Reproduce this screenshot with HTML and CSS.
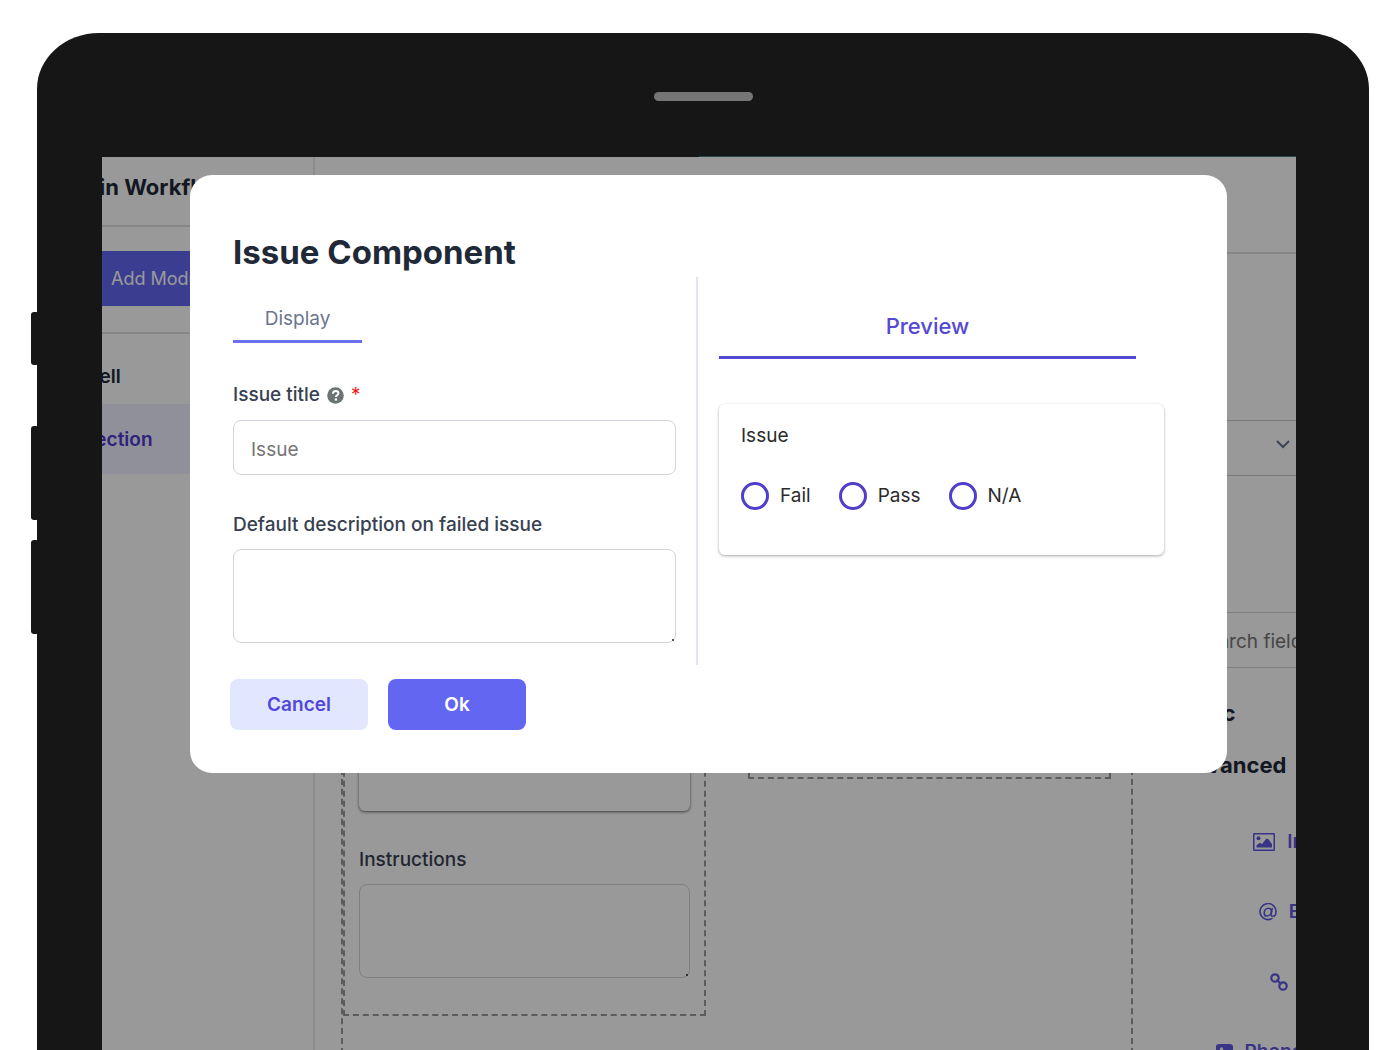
FILE: index.html
```
<!DOCTYPE html>
<html lang="en">
<head>
    <meta charset="UTF-8">
    <meta name="viewport" content="width=device-width, initial-scale=1.0">
    <title>Issue Component</title>
    <link rel="stylesheet" href="styles.css">
</head>
<body>

<div class="tablet">
    <span class="side-button side-button-power"></span>
    <span class="side-button side-button-up"></span>
    <span class="side-button side-button-down"></span>

    <div class="bezel">
        <span class="speaker"></span>
    </div>

    <div class="screen">
        <div class="workspace">
            <nav class="sidebar">
                <h2 class="sidebar-title">Main Workflow</h2>
                <div class="sidebar-action">
                    <button class="add-button" type="button">Add Module</button>
                </div>
                <a class="nav-item" href="#">Well</a>
                <a class="nav-item active" href="#">Section</a>
            </nav>

            <div class="work-area">
                <div class="topbar"></div>
                <div class="columns">
                    <main class="canvas">
                        <div class="drop-column">
                            <div class="canvas-card"></div>
                            <label class="field-label" for="instructions">Instructions</label>
                            <textarea class="text-field area" id="instructions"></textarea>
                        </div>
                        <div class="drop-column"></div>
                    </main>

                    <aside class="fields-panel">
                        <button class="panel-select" type="button" aria-label="Open list">
                            <svg width="14" height="9" viewBox="0 0 14 9" fill="none" stroke="currentColor" stroke-width="2"><path d="M1 1l6 6 6-6"/></svg>
                        </button>
                        <input class="panel-search" type="text" placeholder="Search fields" aria-label="Search fields">
                        <h3 class="group-title">Basic</h3>
                        <h3 class="group-title">Advanced</h3>
                        <div class="field-list">
                            <button class="field-item" type="button">
                                <svg width="22" height="18" viewBox="0 0 22 18" fill="currentColor"><path fill-rule="evenodd" d="M1 0h20a1 1 0 0 1 1 1v16a1 1 0 0 1-1 1H1a1 1 0 0 1-1-1V1a1 1 0 0 1 1-1zm.5 1.500v15h19v-15z"/><circle cx="5.500" cy="5.200" r="2"/><path d="M3.500 14.500v-2l3-2.700 2.500 1.200 4.500-5.500 2 .8 3.500 4.700v3.500z"/></svg>
                                Image
                            </button>
                            <button class="field-item" type="button">
                                <svg width="18" height="18" viewBox="0 0 18 18" fill="none" stroke="currentColor" stroke-width="1.600"><path d="M13.500 15.200A8 8 0 1 1 17 9c0 2.800-1.500 4.300-3.200 4.300-1.500 0-1.900-1-1.600-2.400l1.100-5.700"/><path d="M12.400 8.200C12.300 6.400 11.200 5.200 9.500 5.200 7 5.200 5.200 7.400 5.200 9.900c0 1.900 1 3.100 2.700 3.100 2.300 0 4.300-2.200 4.500-4.800z"/></svg>
                                Email
                            </button>
                            <button class="field-item" type="button">
                                <svg width="18" height="18" viewBox="0 0 18 18" fill="none" stroke="currentColor" stroke-width="2.200"><circle cx="5" cy="5" r="3.700"/><circle cx="13" cy="13" r="3.700"/><path d="M6.500 6.500l5 5"/></svg>
                                Url
                            </button>
                            <button class="field-item" type="button">
                                <svg width="17" height="17" viewBox="0 0 17 17"><rect width="17" height="17" rx="3" fill="currentColor"/><path d="M4 4l2-1 1.500 3-1.300 1.200c.7 1.500 2 2.800 3.500 3.500L11 9.500l3 1.500-1 2C8 13.500 3.500 9 4 4z" fill="#fff"/></svg>
                                Phone Number
                            </button>
                        </div>
                    </aside>
                </div>
            </div>
        </div>

        <div class="overlay">
            <div class="modal" role="dialog" aria-labelledby="modal-title">
                <h1 class="modal-title" id="modal-title">Issue Component</h1>
                <div class="modal-body">
                    <form class="settings">
                        <button class="tab" type="button">Display</button>
                        <div class="label-row">
                            <label class="field-label" for="issue-title">Issue title</label>
                            <svg class="help" width="17" height="17" viewBox="0 0 17 17"><circle cx="8.500" cy="8.500" r="8.300" fill="#6b7373"/><path d="M5.900 6.600c.1-1.700 1.200-2.600 2.800-2.600 1.500 0 2.700.9 2.700 2.300 0 2-2.500 2-2.500 3.700" fill="none" stroke="#fff" stroke-width="2"/><rect x="7.800" y="11.400" width="2.200" height="2.200" fill="#fff"/></svg>
                            <span class="required">*</span>
                        </div>
                        <input class="text-field" id="issue-title" type="text" placeholder="Issue">
                        <label class="field-label" for="description">Default description on failed issue</label>
                        <textarea class="text-field area" id="description"></textarea>
                    </form>

                    <section class="preview">
                        <h2 class="preview-title">Preview</h2>
                        <fieldset class="preview-card">
                            <legend>Issue</legend>
                            <div class="options">
                                <label class="option"><input type="radio" name="issue">Fail</label>
                                <label class="option"><input type="radio" name="issue">Pass</label>
                                <label class="option"><input type="radio" name="issue">N/A</label>
                            </div>
                        </fieldset>
                    </section>
                </div>
                <div class="modal-actions">
                    <button class="button button-cancel" type="button">Cancel</button>
                    <button class="button button-ok" type="button">Ok</button>
                </div>
            </div>
        </div>
    </div>
</div>

</body>
</html>
```

FILE: styles.css
```
* {
    box-sizing: border-box;
}
body {
    margin: 0;
    height: 100vh;
    padding: 33px 31px 0 37px;
    overflow: hidden;
    background-color: #fff;
    font-family: Inter, sans-serif;
    font-size: 19px;
    line-height: 24px;
    color: #374151;
}
h1, h2, h3 {
    margin: 0;
}
button, input, textarea {
    font: inherit;
}

/* Tablet frame */
.tablet {
    position: relative;
    display: flex;
    flex-direction: column;
    height: 100%;
    padding: 0 73px 0 65px;
    border-radius: 62px 62px 0 0 / 56px 56px 0 0;
    background-color: #161616;
}
.side-button {
    position: absolute;
    left: -6px;
    width: 8px;
    height: 94px;
    border-radius: 3px;
    background-color: #161616;
}
.side-button-power {
    top: 279px;
    height: 53px;
}
.side-button-up {
    top: 393px;
}
.side-button-down {
    top: 507px;
}
.bezel {
    display: flex;
    justify-content: center;
    flex: none;
    height: 124px;
    padding: 59px 0 0 8px;
    background: linear-gradient(#2b4552, #2b4552) right bottom / 50% 1px no-repeat;
}
.speaker {
    width: 99px;
    height: 9px;
    border-radius: 5px;
    background-color: #757575;
}
.screen {
    position: relative;
    flex: 1;
    min-height: 0;
    overflow: hidden;
    background-color: #fff;
}

/* Form builder behind the dialog */
.workspace {
    display: flex;
    margin-left: -40px;
    margin-right: -100px;
    height: 100%;
}
.sidebar {
    flex: none;
    width: 253px;
    border-right: 2px solid #ebebeb;
}
.sidebar-title {
    padding: 16px 0 23px 4px;
    border-bottom: 2px solid #dcdfe3;
    font-size: 22px;
    line-height: 29px;
    color: #1f2937;
}
.sidebar-action {
    padding: 24px 0 26px;
    border-bottom: 2px solid #dcdfe3;
}
.add-button {
    display: block;
    width: 100%;
    height: 55px;
    padding: 0 49px;
    border: none;
    background-color: #6366f1;
    color: #fff;
    font-size: 18px;
    text-align: left;
}
.nav-item {
    display: block;
    padding: 24px 21px 22px;
    font-weight: 600;
    color: #1f2937;
    text-decoration: none;
}
.sidebar-action + .nav-item {
    padding: 31px 19px 15px;
}
.nav-item.active {
    background-color: #eef0ff;
    color: #4f38d0;
}
.work-area {
    display: flex;
    flex-direction: column;
    flex: 1;
}
.topbar {
    flex: none;
    height: 97px;
    border-bottom: 2px solid #dcdfe3;
}
.columns {
    display: flex;
    flex: 1;
    padding-top: 166px;
}
.canvas {
    display: flex;
    align-items: flex-start;
    gap: 42px;
    flex: none;
    width: 792px;
    margin-left: 26px;
    border: 2px dashed #999;
}
.drop-column {
    width: 363px;
    height: 357px;
    padding: 14px;
    border: 2px dashed #999;
}
.drop-column:first-child {
    height: auto;
    padding-bottom: 36px;
}
.canvas-card {
    height: 373px;
    margin-bottom: 37px;
    border-radius: 6px;
    box-shadow: 0 1px 3px rgba(0, 0, 0, 0.6);
}
.fields-panel {
    flex: 1;
    padding-left: 27px;
}
.panel-select {
    display: block;
    width: 100%;
    height: 56px;
    padding: 0 0 11px 115px;
    border: 1px solid #c5cad1;
    background: none;
    text-align: left;
    color: #64748b;
}
.panel-search {
    display: block;
    width: 100%;
    height: 56px;
    margin: 136px 0 31px;
    padding: 3px 0 0 34px;
    border: 1px solid #d1d5db;
    border-radius: 6px;
}
.group-title {
    margin-bottom: 24px;
    padding-left: 17px;
    font-size: 22px;
    line-height: 28px;
    color: #1f2937;
}
.field-list {
    display: flex;
    flex-direction: column;
    align-items: center;
    gap: 46px;
    padding: 27px 0 0 41px;
}
.field-item {
    display: flex;
    align-items: center;
    gap: 12px;
    padding: 0;
    border: none;
    background: none;
    font-weight: 600;
    color: #6058e0;
    white-space: nowrap;
}

/* Shared fields */
.field-label {
    display: block;
    font-weight: 500;
}
.text-field {
    display: block;
    width: 100%;
    height: 55px;
    padding: 3px 17px 0;
    border: 1px solid #d1d5db;
    border-radius: 8px;
    background: none;
    color: #374151;
}
.text-field::placeholder,
.panel-search::placeholder {
    color: #757575;
    opacity: 1;
}
.area {
    height: 94px;
    margin-top: 12px;
}
.area::-webkit-resizer {
    background: linear-gradient(#4b5563, #4b5563) 12px 12px / 2px 2px no-repeat;
}

/* Dialog */
.overlay {
    position: absolute;
    inset: 0;
    padding: 18px 69px 0 88px;
    background-color: rgba(0, 0, 0, 0.4);
}
.modal {
    padding: 55px 43px 43px;
    border-radius: 22px;
    background-color: #fff;
}
.modal-title {
    font-size: 33px;
    line-height: 44px;
    color: #1f2937;
}
.modal-body {
    display: flex;
    margin-top: 3px;
}
.settings {
    flex: none;
    width: 465px;
    padding: 28px 20px 22px 0;
    border-right: 2px solid #e0e4f5;
}
.tab {
    display: block;
    width: 129px;
    height: 38px;
    margin-bottom: 40px;
    padding: 0 0 8px;
    border: none;
    border-bottom: 3px solid #6b70ee;
    background: none;
    color: #6b7590;
}
.label-row {
    display: flex;
    align-items: center;
    gap: 7px;
    margin-bottom: 13px;
}
.required {
    color: #f01818;
}
.settings .text-field + .field-label {
    margin-top: 38px;
}
.preview {
    flex: 1;
    padding: 34px 20px 0 21px;
}
.preview-title {
    margin-right: 28px;
    padding-bottom: 15px;
    border-bottom: 3px solid #5448d4;
    font-size: 22px;
    font-weight: 500;
    line-height: 30px;
    text-align: center;
    color: #5448d4;
}
.preview-card {
    min-width: 0;
    margin: 45px 0 0;
    padding: 20px 22px 45px;
    border: none;
    border-radius: 6px;
    box-shadow: 0 1px 3px rgba(0, 0, 0, 0.35);
    color: #2b2b2b;
}
.preview-card legend {
    float: left;
    width: 100%;
    padding: 0;
}
.options {
    display: flex;
    clear: both;
    gap: 28px;
    padding-top: 34px;
}
.option {
    display: flex;
    align-items: center;
    gap: 11px;
}
.option input {
    appearance: none;
    width: 28px;
    height: 28px;
    margin: 0;
    border: 3px solid #4f3fc8;
    border-radius: 50%;
}
.modal-actions {
    display: flex;
    gap: 20px;
    margin: 14px 0 0 -3px;
}
.button {
    width: 138px;
    height: 51px;
    padding: 0;
    border: none;
    border-radius: 8px;
    font-weight: 600;
    cursor: pointer;
}
.button-cancel {
    background-color: #e0e7ff;
    color: #5346dc;
}
.button-ok {
    background-color: #6366f1;
    color: #fff;
}
```
